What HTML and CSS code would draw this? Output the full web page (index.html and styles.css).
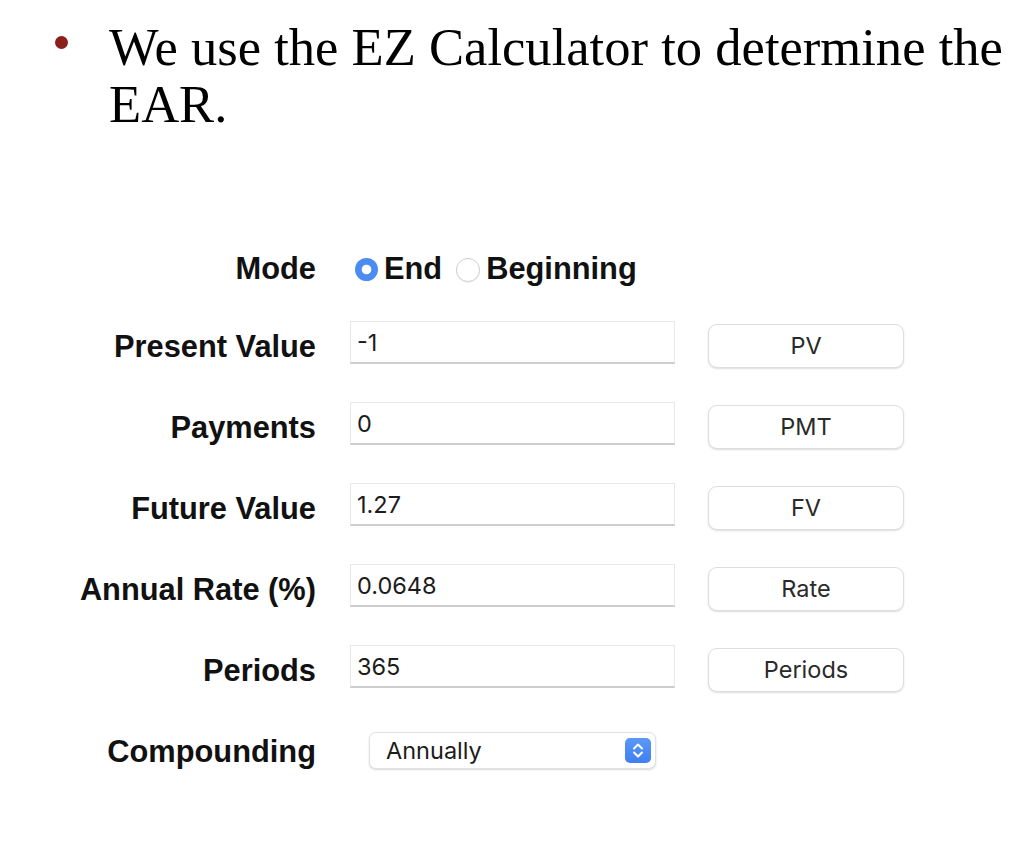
FILE: index.html
```html
<!DOCTYPE html>
<html>
<head>
<meta charset="utf-8">
<link rel="stylesheet" href="styles.css">
</head>
<body>
<div class="slide">
  <div class="bullet-item">
    <span class="bullet"></span>
    <p class="bullet-text">We use the EZ Calculator to determine the EAR.</p>
  </div>

  <div class="calc">
    <div class="label mode-label">Mode</div>
    <div class="radios">
      <span class="radio radio-on"></span><span class="radio-text">End</span>
      <span class="radio radio-off"></span><span class="radio-text">Beginning</span>
    </div>
    <div></div>

    <div class="label">Present Value</div>
    <div class="field">-1</div>
    <div class="btn">PV</div>

    <div class="label">Payments</div>
    <div class="field">0</div>
    <div class="btn">PMT</div>

    <div class="label">Future Value</div>
    <div class="field">1.27</div>
    <div class="btn">FV</div>

    <div class="label">Annual Rate (%)</div>
    <div class="field">0.0648</div>
    <div class="btn">Rate</div>

    <div class="label">Periods</div>
    <div class="field">365</div>
    <div class="btn">Periods</div>

    <div class="label">Compounding</div>
    <div class="select">
      <span class="select-text">Annually</span>
      <span class="stepper">
        <svg width="26" height="25" viewBox="0 0 26 25">
          <path d="M9 10.5 L13 6.5 L17 10.5" fill="none" stroke="#fff" stroke-width="2" stroke-linecap="round" stroke-linejoin="round"/>
          <path d="M9 14.5 L13 18.5 L17 14.5" fill="none" stroke="#fff" stroke-width="2" stroke-linecap="round" stroke-linejoin="round"/>
        </svg>
      </span>
    </div>
    <div></div>
  </div>
</div>
</body>
</html>
```

FILE: styles.css
```css
html, body {
  margin: 0;
  padding: 0;
  background: #ffffff;
}

.slide {
  width: 1036px;
  height: 852px;
  padding-top: 19px;
  box-sizing: border-box;
}

.bullet-item {
  display: flex;
  align-items: flex-start;
  padding-left: 55px;
}

.bullet {
  flex: none;
  width: 13px;
  height: 13px;
  border-radius: 50%;
  background: #8b1f1b;
  margin-top: 17px;
  margin-right: 41px;
}

.bullet-text {
  margin: 0;
  width: 920px;
  font-family: "Liberation Serif", "Times New Roman", serif;
  font-size: 52.6px;
  line-height: 57px;
  color: #000;
}

.calc {
  margin-top: 121px;
  display: grid;
  grid-template-columns: 316px 325px 195px;
  grid-template-rows: 29px repeat(5, 43px) 43px;
  column-gap: 34px;
  row-gap: 38px;
  align-items: center;
}

.calc > .btn {
  margin-left: -1px;
}

.label {
  text-align: right;
  font-family: "Liberation Sans", Arial, Helvetica, sans-serif;
  font-weight: bold;
  font-size: 30.8px;
  line-height: 34px;
  color: #111;
  padding-top: 8px;
}

.mode-label {
  padding-top: 0;
}

.radios {
  display: flex;
  align-items: center;
  padding-left: 5px;
  font-family: "Liberation Sans", Arial, Helvetica, sans-serif;
  font-weight: bold;
  font-size: 30.8px;
  line-height: 34px;
  color: #111;
}

.radio {
  flex: none;
  width: 23px;
  height: 23px;
  border-radius: 50%;
  box-sizing: border-box;
  margin-top: 2px;
}

.radio-on {
  background: radial-gradient(circle at center, #ffffff 0, #ffffff 4.4px, #4a8cf4 5.2px);
}

.radio-off {
  border: 1px solid #cfcfcf;
  background: #fff;
  box-shadow: 0 1px 1px rgba(0,0,0,0.06);
  width: 24px;
  height: 24px;
  margin-left: 14px;
}

.radio-text {
  margin-left: 6px;
}

.radio-off + .radio-text {
  margin-left: 6px;
}

.field {
  height: 43px;
  box-sizing: border-box;
  border: 1px solid #e8e8e8;
  border-bottom: 2px solid #cdcdcd;
  background: #fff;
  padding-left: 6px;
  font-family: Inter, "Noto Sans", sans-serif;
  font-size: 23.5px;
  line-height: 41px;
  color: #1c1c1c;
}

.btn {
  align-self: start;
  margin-top: 3px;
  height: 44px;
  box-sizing: border-box;
  border: 1px solid #dedede;
  border-radius: 9px;
  background: #fff;
  box-shadow: 0 1px 2px rgba(0,0,0,0.14);
  text-align: center;
  font-family: Inter, "Noto Sans", sans-serif;
  font-size: 23.5px;
  line-height: 42px;
  color: #2a2a2a;
}

.select {
  margin-left: 19px;
  margin-top: 5px;
  width: 287px;
  height: 37px;
  box-sizing: border-box;
  border: 1px solid #e2e2e2;
  border-radius: 7px;
  background: #fff;
  box-shadow: 0 1px 2px rgba(0,0,0,0.16);
  display: flex;
  align-items: center;
  justify-content: space-between;
  padding-left: 16px;
  padding-right: 4px;
}

.select-text {
  font-family: Inter, "Noto Sans", sans-serif;
  font-size: 23.5px;
  color: #1c1c1c;
}

.stepper {
  width: 26px;
  height: 25px;
  border-radius: 5px;
  background: linear-gradient(#5a98f8, #3f7ff0);
  display: flex;
}
```
